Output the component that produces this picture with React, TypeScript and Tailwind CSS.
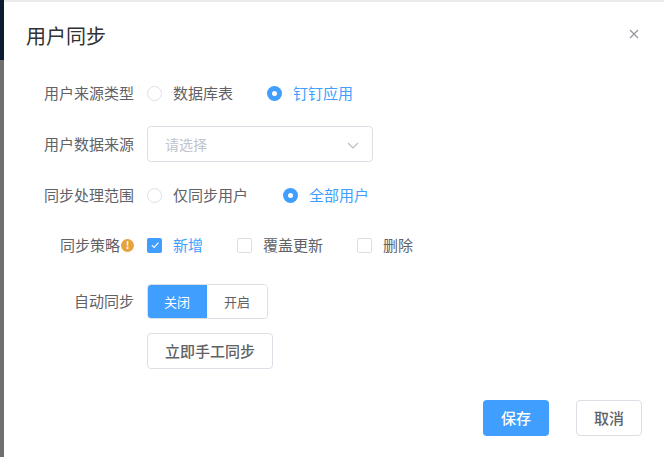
import React from "react";

const font = { fontFamily: '"Noto Sans CJK SC", "Noto Sans", sans-serif' };

const Radio = ({ label, checked }: { label: string; checked?: boolean }) => (
  <label className="flex items-center cursor-pointer">
    {checked ? (
      <span className="w-[15px] h-[15px] rounded-full bg-[#409eff] flex items-center justify-center">
        <span className="w-[5px] h-[5px] rounded-full bg-white" />
      </span>
    ) : (
      <span className="w-[15px] h-[15px] rounded-full border border-[#dcdfe6] bg-white" />
    )}
    <span className={`ml-[11px] text-[15px] ${checked ? "text-[#409eff]" : "text-[#606266]"}`}>{label}</span>
  </label>
);

const Checkbox = ({ label, checked }: { label: string; checked?: boolean }) => (
  <label className="flex items-center cursor-pointer">
    {checked ? (
      <span className="w-[15px] h-[15px] rounded-[2px] bg-[#409eff] flex items-center justify-center">
        <svg viewBox="0 0 10 10" className="w-[10px] h-[10px]">
          <path d="M1.8 5.2L4.2 7.4L8.4 2.6" stroke="#fff" strokeWidth="1.1" fill="none" />
        </svg>
      </span>
    ) : (
      <span className="w-[15px] h-[15px] rounded-[2px] border border-[#dcdfe6] bg-white" />
    )}
    <span className={`ml-[11px] text-[15px] ${checked ? "text-[#409eff]" : "text-[#606266]"}`}>{label}</span>
  </label>
);

const Row = ({ label, children, className = "", extra }: { label: string; children: React.ReactNode; className?: string; extra?: React.ReactNode }) => (
  <div className={`flex items-center ${className}`}>
    <div className="w-[143px] pr-[13px] flex items-center justify-end text-[15px] text-[#606266] shrink-0">
      {label}
      {extra}
    </div>
    {children}
  </div>
);

export default function App() {
  return (
    <div className="w-[664px] h-[457px] flex bg-white overflow-hidden" style={font}>
      <div className="w-[4px] h-full flex flex-col shrink-0">
        <div className="h-[60px] bg-[#0c1b33]" />
        <div className="flex-1 bg-[#6f6f6f]" />
      </div>
      <div className="flex-1 flex flex-col border-t-2 border-[#ebebeb]">
        <div className="h-[73px] flex items-start justify-between pt-[22px] pl-[22px] pr-[25px]">
          <h2 className="text-[20px] leading-[24px] text-[#303133]">用户同步</h2>
          <svg viewBox="0 0 10 10" className="w-[10px] h-[10px] mt-[5px]">
            <path d="M1 1L9 9M9 1L1 9" stroke="#909399" strokeWidth="1.1" />
          </svg>
        </div>

        <Row label="用户来源类型" className="h-[36px]">
          <div className="flex items-center gap-[34px]">
            <Radio label="数据库表" />
            <Radio label="钉钉应用" checked />
          </div>
        </Row>

        <Row label="用户数据来源" className="h-[36px] mt-[15px]">
          <div className="w-[226px] h-[36px] border border-[#dcdfe6] rounded-[4px] flex items-center justify-between pl-[17px] pr-[13px]">
            <span className="text-[14px] text-[#c0c4cc]">请选择</span>
            <svg viewBox="0 0 12 7" className="w-[12px] h-[7px] mt-[3px]">
              <path d="M1 1L6 6L11 1" stroke="#b8bcc4" strokeWidth="1.1" fill="none" />
            </svg>
          </div>
        </Row>

        <Row label="同步处理范围" className="h-[36px] mt-[15px]">
          <div className="flex items-center gap-[35px]">
            <Radio label="仅同步用户" />
            <Radio label="全部用户" checked />
          </div>
        </Row>

        <Row
          label="同步策略"
          className="h-[36px] mt-[14px]"
          extra={
            <span className="ml-[1px] w-[13px] h-[13px] rounded-full bg-[#e6a23c] text-white text-[10px] font-bold leading-none flex items-center justify-center">!</span>
          }
        >
          <div className="flex items-center gap-[34px]">
            <Checkbox label="新增" checked />
            <Checkbox label="覆盖更新" />
            <Checkbox label="删除" />
          </div>
        </Row>

        <Row label="自动同步" className="h-[35px] mt-[21px]">
          <div className="flex h-[35px] rounded-[4px] overflow-hidden border border-[#dcdfe6]">
            <button className="w-[60px] -my-[1px] -ml-[1px] bg-[#409eff] text-white text-[13px]">关闭</button>
            <button className="w-[60px] bg-white text-[#606266] text-[13px]">开启</button>
          </div>
        </Row>

        <div className="flex h-[36px] mt-[14px] pl-[143px]">
          <button className="w-[126px] h-[36px] border border-[#dcdfe6] rounded-[4px] text-[15px] font-medium text-[#606266] bg-white">立即手工同步</button>
        </div>

        <div className="flex justify-end items-center gap-[27px] mt-[31px] pr-[22px]">
          <button className="w-[66px] h-[36px] rounded-[4px] bg-[#409eff] text-white text-[15px] font-medium">保存</button>
          <button className="w-[66px] h-[36px] rounded-[4px] border border-[#dcdfe6] bg-white text-[#606266] text-[15px] font-medium">取消</button>
        </div>
      </div>
    </div>
  );
}
